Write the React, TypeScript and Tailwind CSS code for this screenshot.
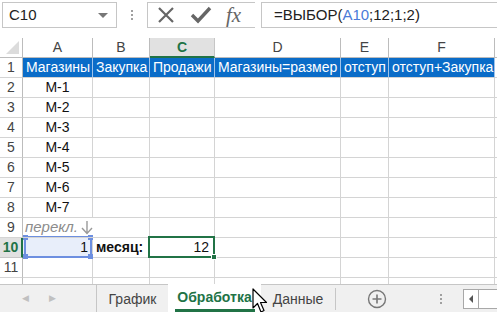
import React from 'react';

const cols = ['A', 'B', 'C', 'D', 'E', 'F'];
const widths = ['w-[70px]', 'w-[57px]', 'w-[65px]', 'w-[126px]', 'w-[48px]', 'w-[106px]'];

const headerRow = ['Магазины', 'Закупка', 'Продажи', 'Магазины=размер', 'отступ', 'отступ+Закупка'];

function RowHeader({ n, active }: { n: number; active?: boolean }) {
  return (
    <div
      className={`w-[23px] shrink-0 h-full flex items-center justify-center border-r border-b ${
        active
          ? 'bg-[#e1e1e1] text-[#217346] font-bold border-r-[#217346] border-r-2 border-b-[#c6c6c6]'
          : 'text-[#444] border-r-[#bcbcbc] border-b-[#d4d4d4]'
      }`}
    >
      {n}
    </div>
  );
}

function Cell({ i, children, className = '' }: { i: number; children?: React.ReactNode; className?: string }) {
  return (
    <div className={`${widths[i]} shrink-0 h-full border-r border-b border-[#d4d4d4] flex items-center ${className}`}>
      {children}
    </div>
  );
}

export default function App() {
  const stores = ['М-1', 'М-2', 'М-3', 'М-4', 'М-5', 'М-6', 'М-7'];

  return (
    <div className="w-[497px] h-[312px] bg-white overflow-hidden relative font-['Liberation_Sans',sans-serif] text-[14px] text-[#111]">
      {/* formula bar */}
      <div className="h-[38px] flex items-start pt-[2px] pl-[2px]">
        <div className="w-[115px] h-[26px] border border-[#c6c6c6] flex items-center pl-[6px] pr-[8px] text-[15px] text-[#222]">
          <span className="flex-1">C10</span>
          <span className="w-0 h-0 border-l-[5px] border-r-[5px] border-t-[5px] border-l-transparent border-r-transparent border-t-[#777]" />
        </div>
        <div className="w-[30px] h-[26px] flex flex-col items-center justify-center gap-[2px]">
          <span className="w-[2px] h-[2px] bg-[#a0a0a0]" />
          <span className="w-[2px] h-[2px] bg-[#a0a0a0]" />
          <span className="w-[2px] h-[2px] bg-[#a0a0a0]" />
        </div>
        <div className="w-[108px] h-[26px] border border-[#c6c6c6] border-r-0 flex items-center pl-[8px] gap-[14px]">
          <svg width="20" height="20" viewBox="0 0 20 20">
            <path d="M3 3 L17 17 M17 3 L3 17" stroke="#666" strokeWidth="2.2" fill="none" />
          </svg>
          <svg width="22" height="20" viewBox="0 0 22 20">
            <path d="M2 10 L8 16 L20 3" stroke="#666" strokeWidth="3.4" fill="none" />
          </svg>
          <span className="font-['Liberation_Serif',serif] italic text-[21px] text-[#666] leading-none">fx</span>
        </div>
        <div className="w-[6px]" />
        <div className="flex-1 h-[26px] border border-[#c6c6c6] border-r-0 flex items-center pl-[12px] text-[15px] text-[#222]">
          =ВЫБОР(<span className="text-[#4a7bd8]">A10</span>;12;1;2)
        </div>
      </div>

      {/* column headers */}
      <div className="h-[20px] flex">
        <div className="w-[23px] shrink-0 h-full border-r border-b border-[#bcbcbc] relative">
          <span className="absolute right-[3px] bottom-[3px] w-0 h-0 border-l-[13px] border-b-[13px] border-l-transparent border-b-[#dcdcdc]" />
        </div>
        {cols.map((c, i) => (
          <div
            key={c}
            className={`${widths[i]} shrink-0 h-full flex items-center justify-center border-r ${
              c === 'C'
                ? 'bg-[#e1e1e1] text-[#217346] font-bold border-b-2 border-b-[#217346] border-r-[#c6c6c6]'
                : 'text-[#444] border-b border-[#bcbcbc]'
            }`}
          >
            {c}
          </div>
        ))}
        <div className="flex-1 border-b border-[#bcbcbc]" />
      </div>

      {/* row 1 */}
      <div className="h-[20px] flex">
        <RowHeader n={1} />
        {headerRow.map((t, i) => (
          <div
            key={t}
            className={`${widths[i]} shrink-0 h-full bg-[#0a6cc8] text-white border-r border-[#9ec3ea] border-b border-b-[#d4d4d4] flex items-center pl-[3px] whitespace-nowrap overflow-hidden`}
          >
            {t}
          </div>
        ))}
        <div className="flex-1 border-b border-[#d4d4d4]" />
      </div>

      {/* rows 2-8 */}
      {stores.map((s, r) => (
        <div key={s} className="h-[20px] flex">
          <RowHeader n={r + 2} />
          <Cell i={0} className="justify-center">{s}</Cell>
          {[1, 2, 3, 4, 5].map((i) => (
            <Cell key={i} i={i} />
          ))}
          <div className="flex-1 border-b border-[#d4d4d4]" />
        </div>
      ))}

      {/* row 9 */}
      <div className="h-[20px] flex">
        <RowHeader n={9} />
        <Cell i={0} className="pl-[2px] whitespace-nowrap overflow-visible relative z-10 border-r-0 gap-[3px]">
          <span className="italic text-[#8c8c8c] text-[15px]">перекл.</span>
          <svg width="12" height="15" viewBox="0 0 12 15">
            <path d="M6 1 V13 M1 8 L6 13.5 L11 8" stroke="#9a9a9a" strokeWidth="1.4" fill="none" />
          </svg>
        </Cell>
        {[1, 2, 3, 4, 5].map((i) => (
          <Cell key={i} i={i} />
        ))}
        <div className="flex-1 border-b border-[#d4d4d4]" />
      </div>

      {/* row 10 */}
      <div className="h-[20px] flex relative">
        <RowHeader n={10} active />
        <Cell i={0} className="justify-end pr-[4px] bg-[#e8eefa]">1</Cell>
        <Cell i={1} className="pl-[3px] font-bold">месяц:</Cell>
        <Cell i={2} className="justify-end pr-[5px]">12</Cell>
        {[3, 4, 5].map((i) => (
          <Cell key={i} i={i} />
        ))}
        <div className="flex-1 border-b border-[#d4d4d4]" />

        {/* reference highlight on A10 */}
        <div className="absolute left-[24px] top-[-2px] w-[68px] h-[22px] border-2 border-[#6d8fe0] pointer-events-none">
          <span className="absolute -left-[3px] -top-[3px] w-[5px] h-[5px] bg-[#6d8fe0]" />
          <span className="absolute -right-[3px] -top-[3px] w-[5px] h-[5px] bg-[#6d8fe0]" />
          <span className="absolute -left-[3px] -bottom-[3px] w-[5px] h-[5px] bg-[#6d8fe0]" />
          <span className="absolute -right-[3px] -bottom-[3px] w-[5px] h-[5px] bg-[#6d8fe0]" />
        </div>
        {/* active cell C10 */}
        <div className="absolute left-[148px] top-[-2px] w-[67px] h-[22px] border-2 border-[#217346] pointer-events-none">
          <span className="absolute -right-[4px] -bottom-[4px] w-[6px] h-[6px] bg-[#217346] border border-white" />
        </div>
      </div>

      {/* row 11 */}
      <div className="h-[20px] flex">
        <RowHeader n={11} />
        {[0, 1, 2, 3, 4, 5].map((i) => (
          <Cell key={i} i={i} />
        ))}
        <div className="flex-1 border-b border-[#d4d4d4]" />
      </div>

      {/* row 12 partial */}
      <div className="h-[6px] flex">
        <div className="w-[23px] shrink-0 h-full border-r border-[#bcbcbc]" />
        {[0, 1, 2, 3, 4, 5].map((i) => (
          <div key={i} className={`${widths[i]} shrink-0 h-full border-r border-[#d4d4d4]`} />
        ))}
      </div>

      {/* sheet tabs */}
      <div className="h-[29px] flex bg-[#f0f0f0] border-t border-[#c6c6c6] text-[14px] font-['Liberation_Sans',sans-serif]">
        <div className="w-[97px] shrink-0 flex items-center pl-[22px] gap-[20px] text-[#c0c0c0] text-[9px] border-r border-[#c6c6c6]">
          <span>◀</span>
          <span>▶</span>
        </div>
        <div className="w-[71px] shrink-0 flex items-center justify-center text-[#444]">График</div>
        <div className="w-[93px] shrink-0 -mt-px bg-white flex flex-col items-center">
          <div className="flex-1 flex items-center text-[#217346] font-bold pt-[2px]">Обработка</div>
          <div className="h-[3px] w-[80px] bg-[#217346] mb-[1px]" />
        </div>
        <div className="w-[75px] shrink-0 flex items-center justify-center text-[#444] border-r border-[#c6c6c6] my-[3px]">Данные</div>
        <div className="w-[82px] shrink-0 flex items-center justify-center">
          <svg width="20" height="20" viewBox="0 0 20 20">
            <circle cx="10" cy="10" r="8.5" stroke="#777" strokeWidth="1.4" fill="none" />
            <path d="M10 5.5 V14.5 M5.5 10 H14.5" stroke="#777" strokeWidth="1.6" />
          </svg>
        </div>
        <div className="w-[45px] shrink-0 flex flex-col items-center justify-center gap-[2px]">
          <span className="w-[2px] h-[2px] bg-[#a0a0a0]" />
          <span className="w-[2px] h-[2px] bg-[#a0a0a0]" />
          <span className="w-[2px] h-[2px] bg-[#a0a0a0]" />
        </div>
        <div className="flex-1 flex items-center">
          <div className="h-[20px] w-[16px] border border-[#a8a8a8] bg-white flex items-center justify-center">
            <span className="w-0 h-0 border-t-[4px] border-b-[4px] border-r-[4px] border-t-transparent border-b-transparent border-r-[#555]" />
          </div>
          <div className="h-[20px] flex-1 border-y border-[#a8a8a8] bg-white" />
        </div>
      </div>

      {/* mouse cursor */}
      <svg className="absolute left-[252px] top-[288px]" width="16" height="26" viewBox="0 0 16 26">
        <path d="M1 1 L1 20 L5.5 15.5 L9 24 L12 22.5 L8.5 14.5 L14.5 14.5 Z" fill="white" stroke="black" strokeWidth="1.2" strokeLinejoin="round" />
      </svg>
    </div>
  );
}
